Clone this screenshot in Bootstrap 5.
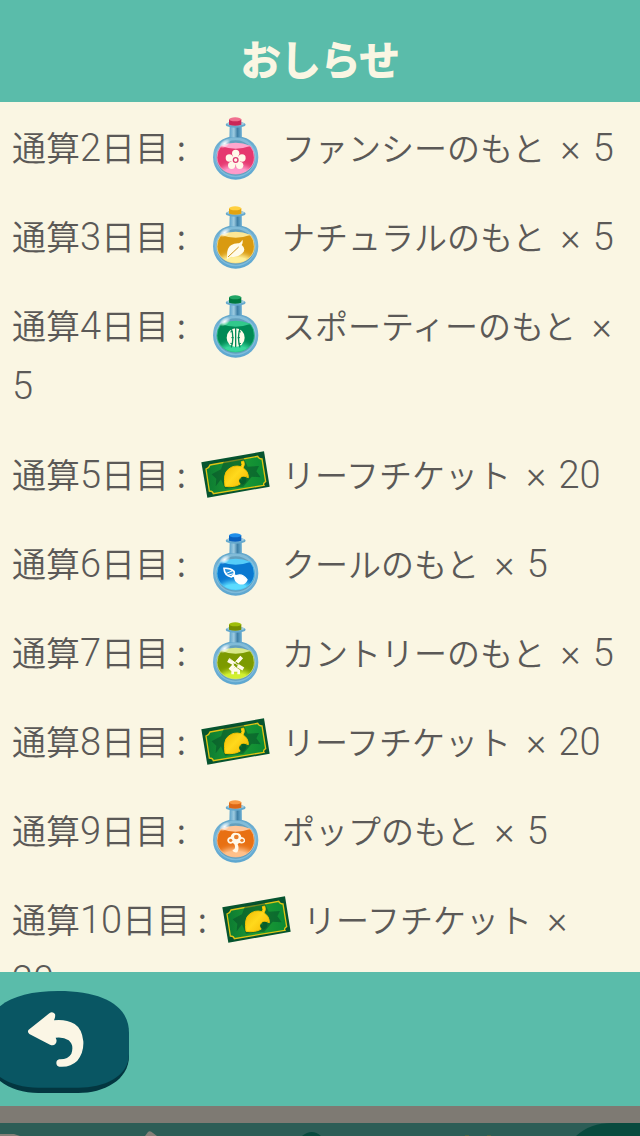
<!DOCTYPE html>
<html lang="ja">
<head>
<meta charset="utf-8">
<meta name="viewport" content="width=device-width, initial-scale=1">
<title>おしらせ</title>
<link href="https://cdn.jsdelivr.net/npm/bootstrap@5.3.0/dist/css/bootstrap.min.css" rel="stylesheet">
<style>
body { background: #faf6e3; color: #5b5957; font-family: "Noto Sans CJK JP", sans-serif; font-size: 34px; font-weight: 350; line-height: 60px; }
.bar-teal { background: #5abcaa; }
.notice-head { padding: 28px 0 14px; }
.notice-head h1 { font-size: 40px; line-height: 60px; font-weight: 500; color: #faf6e3; -webkit-text-stroke: 2px #faf6e3; stroke-linejoin: round; }
.notice-body { min-height: 0; overflow-y: auto; scrollbar-width: none; padding: 15px 22px 0 12px; }
.notice-body::-webkit-scrollbar { display: none; }
.reward { margin-bottom: 29px; }
.num { font-family: Roboto, sans-serif; font-weight: 300; font-size: 38px; line-height: 1; }
.times { margin: 0 3px 0 6px; }
.kana { font-size: 33px; line-height: 1; }
.item-icon { width: 72px; height: 76px; margin: -20px 2px -12px 7px; vertical-align: middle; }
.notice-foot { padding: 19px 0 13px; }
.back-btn svg { width: 130px; height: 102px; }
.strip { height: 17px; background: #7e7a73; }
.tabs { height: 13px; background: #2c5d56; }
.pink { --cork: #c92858; --corktop: #f0708f; --liq: #e6386f; --glow: #ff9aca; --surf: #ffa6cd; }
.gold { --cork: #e2a30f; --corktop: #ffd040; --liq: #d99a10; --glow: #fff09a; --surf: #fce694; }
.jade { --cork: #00793f; --corktop: #22a565; --liq: #008a55; --glow: #38d79c; --surf: #32c98c; }
.blue { --cork: #0a60be; --corktop: #1f8eea; --liq: #0a78d0; --glow: #5cdcff; --surf: #56ccf8; }
.lime { --cork: #768e00; --corktop: #a0be08; --liq: #7c9a00; --glow: #d2f030; --surf: #d8e888; }
.pop { --cork: #dc6816; --corktop: #f99a44; --liq: #e87012; --glow: #ffc08a; --surf: #ffc69a; }
</style>
</head>
<body>
<svg class="position-absolute" width="0" height="0" aria-hidden="true">
  <defs>
    <linearGradient id="glass" x1="0" y1="0" x2="0" y2="1"><stop offset="0" stop-color="#549dc2"/><stop offset=".5" stop-color="#76b5d8"/><stop offset="1" stop-color="#5ca6d0"/></linearGradient>
    <linearGradient id="neck"><stop offset="0" stop-color="#5fa5cc"/><stop offset=".35" stop-color="#9dcbe0"/><stop offset=".65" stop-color="#3d7fa6"/><stop offset="1" stop-color="#6db0d4"/></linearGradient>
    <linearGradient id="ticketBg"><stop offset="0" stop-color="#0b7a32"/><stop offset=".5" stop-color="#1f9c34"/><stop offset="1" stop-color="#0b8a34"/></linearGradient>
    <linearGradient id="leafFill" x1="0" y1="0" x2="1" y2="1"><stop offset="0" stop-color="#eab400"/><stop offset=".5" stop-color="#ffd91c"/><stop offset="1" stop-color="#f3b400"/></linearGradient>
    <radialGradient id="shine"><stop offset="0" stop-color="#fff"/><stop offset="1" stop-color="#fff" stop-opacity=".1"/></radialGradient>
    <filter id="soft" x="-30%" y="-60%" width="160%" height="220%"><feGaussianBlur stdDeviation="8"/></filter>
    <clipPath id="liqClip"><path d="M63 108Q107 96 151 108Q163 122 163 143A56 49 0 0 1 51 143Q51 122 63 108Z"/></clipPath>
  </defs>
  <symbol id="bottle" viewBox="0 0 216 228">
    <path d="M90 50H124L125 80Q175 92 175 142A68 67 0 0 1 39 142Q39 92 89 80Z" fill="url(#glass)"/>
    <ellipse cx="107" cy="142" rx="61" ry="60" fill="#a5d3e6" opacity=".45"/>
    <ellipse cx="107" cy="144" rx="58" ry="53" fill="#3f7d9c" opacity=".45"/>
    <rect x="89" y="48" width="36" height="34" fill="url(#neck)"/>
    <ellipse cx="107" cy="44" rx="30" ry="9" fill="#65a9cd"/>
    <ellipse cx="107" cy="41" rx="26" ry="6" fill="#a3cee0"/>
    <path d="M87 28H124V44Q106 50 87 44Z" style="fill:var(--cork)"/>
    <ellipse cx="105.500" cy="28" rx="18.500" ry="6" style="fill:var(--corktop)"/>
    <path d="M63 108Q107 96 151 108Q163 122 163 143A56 49 0 0 1 51 143Q51 122 63 108Z" style="fill:var(--liq)"/>
    <g clip-path="url(#liqClip)"><ellipse cx="107" cy="187" rx="50" ry="22" style="fill:var(--glow)" filter="url(#soft)"/><ellipse cx="107" cy="182" rx="32" ry="8" style="fill:var(--glow)" opacity=".8"/></g>
    <path d="M63 108Q107 88 151 108Q107 124 63 108Z" style="fill:var(--surf)"/>
    <path d="M63 108Q107 96 151 108Q163 122 163 143A56 49 0 0 1 51 143Q51 122 63 108Z" fill="none" style="stroke:var(--surf)" stroke-width="3" opacity=".7"/>
    <ellipse cx="74" cy="101" rx="18" ry="11" transform="rotate(-35 74 101)" fill="url(#shine)"/>
  </symbol>
  <symbol id="ticket" viewBox="15 -9 216 228">
    <path d="M19 67L207 34L224 140L37 173Z" fill="#06542f"/>
    <path d="M45 75L188 49Q191 57 201 57L212 125Q203 130 207 136L55 161Q53 153 43 153L33 87Q43 83 45 75Z" fill="url(#ticketBg)" stroke="#e0c414" stroke-width="4"/>
    <path d="M50 103L78 88L88 60L145 52L158 80L192 78L184 94L197 112L170 110L145 140L90 146L78 118L62 139L64 116Z" fill="#064a28" opacity=".5"/>
    <path d="M138 80Q143 74 139 65L146 63Q151 74 144 84Q160 93 160 113Q150 106 139 111Q127 119 136 132Q117 143 90 139Q84 100 100 88Q117 74 138 80Z" fill="url(#leafFill)" stroke="#f5c400" stroke-width="3"/>
    <path d="M139 112Q150 107 154 117Q155 130 142 134Q130 130 133 118L142 122Z" fill="#075e2b"/>
  </symbol>
  <symbol id="backMark" viewBox="0 0 390 306">
    <path d="M-37 165C-37 50 50 17 175 17C310 17 387 65 387 150V195C387 268 310 306 235 306H115C40 306-37 268-37 195Z" fill="#033640"/>
    <path d="M-37 125C-37 40 50 0 175 0C310 0 387 45 387 125V188C387 258 310 290 235 290H115C40 290-37 258-37 188Z" fill="#095663"/>
    <path d="M86 116L148 67Q157 60 165 69Q167 77 162 88Q197 84 224 99Q246 113 250 151Q252 185 232 209Q211 230 178 227Q169 225 169 216Q169 207 178 205Q204 206 214 188Q223 162 206 148Q190 137 167 140Q173 151 166 159Q160 165 150 161L88 129Q81 122 86 116Z" fill="#fbf6e5"/>
  </symbol>
</svg>

<div class="d-flex flex-column vh-100 overflow-hidden">
  <header class="notice-head bar-teal text-center"><h1 class="m-0">おしらせ</h1></header>
  <main class="notice-body flex-grow-1">
    <p class="reward">通算<span class="num">2</span>日目 : <svg class="item-icon pink" viewBox="0 0 216 228"><use href="#bottle"/><g fill="#fff9e9"><circle cx="107" cy="130" r="11"/><circle cx="126" cy="144" r="11"/><circle cx="119" cy="166" r="11"/><circle cx="95" cy="166" r="11"/><circle cx="88" cy="144" r="11"/><circle cx="107" cy="150" r="14"/></g><circle cx="107" cy="150" r="7" fill="none" stroke="#dd3b74" stroke-width="4"/></svg> <span class="kana">ファンシーのもと</span><span class="num"> <span class="times">×</span> 5</span></p>
    <p class="reward">通算<span class="num">3</span>日目 : <svg class="item-icon gold" viewBox="0 0 216 228"><use href="#bottle"/><path d="M82 181Q78 148 93 139Q103 132 117 133Q124 130 127 122Q130 131 125 138Q140 150 127 163Q111 177 94 173Q87 175 82 181Z" fill="#fffbe9"/><path d="M84 174Q99 160 116 144" fill="none" stroke="#cf9414" stroke-width="3"/></svg> <span class="kana">ナチュラルのもと</span><span class="num"> <span class="times">×</span> 5</span></p>
    <p class="reward">通算<span class="num">4</span>日目 : <svg class="item-icon jade" viewBox="0 0 216 228"><use href="#bottle"/><ellipse cx="107" cy="149" rx="27" ry="28" fill="#fffbe9"/><path d="M94 121Q103 149 94 178M120 121Q111 149 120 178M107 120V178" fill="none" stroke="#038a57" stroke-width="4"/><path d="M91 132L98 130M94 149H101M91 166L98 168M123 132L116 130M120 149H113M123 166L116 168" stroke="#038a57" stroke-width="3"/></svg> <span class="kana">スポーティーのもと</span><span class="num"> <span class="times">×</span> 5</span></p>
    <p class="reward">通算<span class="num">5</span>日目 : <svg class="item-icon"><use href="#ticket"/></svg> <span class="kana">リーフチケット</span><span class="num"> <span class="times">×</span> 20</span></p>
    <p class="reward">通算<span class="num">6</span>日目 : <svg class="item-icon blue" viewBox="0 0 216 228"><use href="#bottle"/><path d="M72 127Q90 125 102 136Q106 148 94 153Q73 149 72 127Z" fill="#2a93de" stroke="#fff" stroke-width="5"/><path d="M77 143L96 135M83 148L101 143" stroke="#fff" stroke-width="3"/><path d="M97 149Q104 146 110 149Q126 141 141 161Q134 177 118 173Q104 166 104 153Z" fill="#fff" stroke="#fff" stroke-width="4" stroke-linejoin="round"/></svg> <span class="kana">クールのもと</span><span class="num"> <span class="times">×</span> 5</span></p>
    <p class="reward">通算<span class="num">7</span>日目 : <svg class="item-icon lime" viewBox="0 0 216 228"><use href="#bottle"/><g stroke="#fffbe9" stroke-width="11"><path d="M84 136L101 145M113 152L130 162M125 126L111 142M102 151L90 165"/></g><path d="M88 130L128 162M122 124L88 162" stroke="#fffbe9" stroke-width="3"/><path d="M94 165L106 155L120 165V178H112V170H102V178H94Z" fill="#fffbe9"/></svg> <span class="kana">カントリーのもと</span><span class="num"> <span class="times">×</span> 5</span></p>
    <p class="reward">通算<span class="num">8</span>日目 : <svg class="item-icon"><use href="#ticket"/></svg> <span class="kana">リーフチケット</span><span class="num"> <span class="times">×</span> 20</span></p>
    <p class="reward">通算<span class="num">9</span>日目 : <svg class="item-icon pop" viewBox="0 0 216 228"><use href="#bottle"/><path d="M83 147Q78 135 92 131Q96 117 110 120Q122 120 124 132Q137 134 135 146Q130 154 117 150L113 154Q119 166 112 178Q99 180 97 171Q108 169 104 155L99 150Q88 155 83 147Z" fill="#fff9e9"/><g fill="#e97e2a"><circle cx="92" cy="142" r="5"/><circle cx="109" cy="132" r="7"/><circle cx="126" cy="142" r="5"/></g></svg> <span class="kana">ポップのもと</span><span class="num"> <span class="times">×</span> 5</span></p>
    <p class="reward">通算<span class="num">10</span>日目 : <svg class="item-icon"><use href="#ticket"/></svg> <span class="kana">リーフチケット</span><span class="num"> <span class="times">×</span> 20</span></p>
  </main>
  <footer class="notice-foot bar-teal d-flex">
    <button type="button" class="back-btn btn border-0 p-0 d-flex rounded-0" aria-label="もどる"><svg><use href="#backMark"/></svg></button>
  </footer>
  <div class="strip flex-shrink-0"></div>
  <div class="tabs flex-shrink-0 d-flex" aria-hidden="true">
    <svg width="100%" height="13" viewBox="0 0 640 13" preserveAspectRatio="xMidYMin slice"><path d="M0 11H14L20 13H0Z" fill="#858078"/><path d="M145 13L148 9Q150 7 153 10L157 13Z" fill="#858078"/><path d="M302 13Q312 5 321 13Z" fill="#084a3e"/><path d="M576 13Q590 0 612 0H640V13Z" fill="#084a3e"/><path d="M465 12H469V13H465ZM487 12H491V13H487Z" fill="#4f6442"/></svg>
  </div>
</div>
<script src="https://cdn.jsdelivr.net/npm/bootstrap@5.3.0/dist/js/bootstrap.bundle.min.js"></script>
</body>
</html>
